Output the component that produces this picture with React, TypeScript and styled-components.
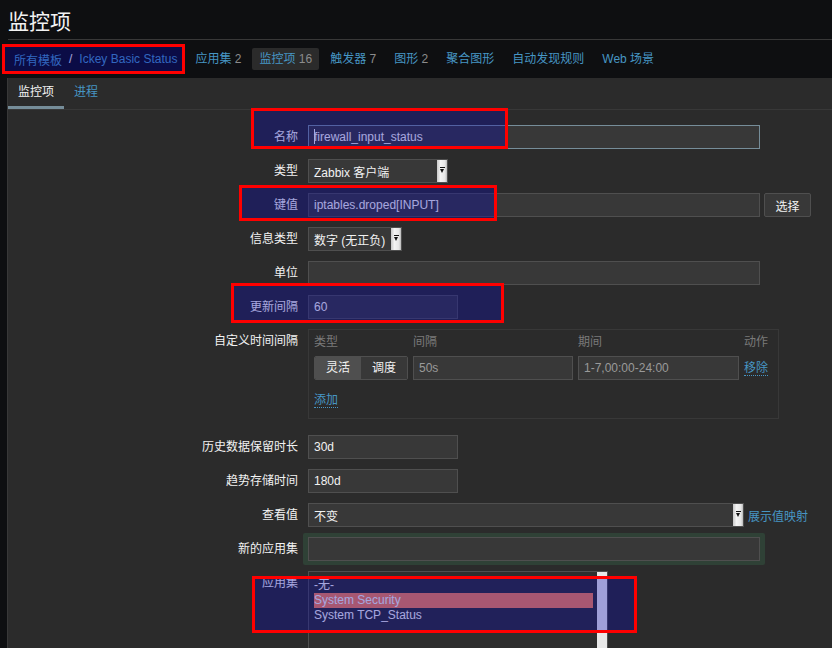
import * as React from 'react';
import styled, { createGlobalStyle } from 'styled-components';

const GlobalStyle = createGlobalStyle`
  html, body {
    margin: 0;
    padding: 0;
    background: #0e0f11;
  }
  body {
    font-family: "Liberation Sans", Arial, "Noto Sans CJK SC", sans-serif;
    font-size: 12px;
    color: #f2f2f2;
  }
`;

const Page = styled.div`
  position: relative;
  width: 832px;
  height: 648px;
  overflow: hidden;
  display: flex;
  flex-direction: column;
`;

const Header = styled.header`
  flex-shrink: 0;
  margin-left: 8px;
  height: 39px;
  border-bottom: 1px solid #383838;
  display: flex;
  align-items: center;
`;

const Title = styled.h1`
  margin: 0;
  font-size: 21px;
  font-weight: normal;
  color: #f2f2f2;
`;

const Nav = styled.nav`
  flex-shrink: 0;
  height: 38px;
  display: flex;
  align-items: center;
  gap: 4px;
  padding-left: 14px;
`;

const Breadcrumbs = styled.div`
  display: flex;
  align-items: center;
  margin-right: 7px;
`;

const Sep = styled.span`
  margin: 0 7px;
  color: #f2f2f2;
`;

const Link = styled.a<{ $dotted?: boolean }>`
  color: #4796c4;
  text-decoration: none;
  cursor: pointer;
  white-space: nowrap;
  ${p => p.$dotted && 'border-bottom: 1px dotted #4796c4; line-height: 15px;'}
`;

const NavItem = styled.a<{ $active?: boolean }>`
  height: 22px;
  line-height: 22px;
  padding: 0 7px;
  border-radius: 2px;
  color: #4796c4;
  white-space: nowrap;
  background: ${p => (p.$active ? '#2b2b2b' : 'transparent')};
`;

const Count = styled.span`
  color: #8c8c8c;
`;

const Panel = styled.main`
  flex: 1 0 auto;
  margin-left: 7px;
  border-left: 1px solid #383838;
  background: #2b2b2b;
`;

const TabBar = styled.div`
  display: flex;
  height: 32px;
  box-sizing: border-box;
  border-bottom: 1px solid #383838;
`;

const Tab = styled.a<{ $active?: boolean }>`
  padding: 0 10px;
  line-height: 28px;
  border-bottom: 3px solid ${p => (p.$active ? '#768d99' : 'transparent')};
  color: ${p => (p.$active ? '#f2f2f2' : '#4796c4')};
`;

const Form = styled.div`
  padding-top: 15px;
`;

const Row = styled.div<{ $gap?: number }>`
  display: grid;
  grid-template-columns: 290px 1fr;
  column-gap: 10px;
  margin-bottom: ${p => p.$gap ?? 10}px;
`;

const Label = styled.label<{ $top?: number }>`
  text-align: right;
  white-space: nowrap;
  color: #f2f2f2;
  line-height: ${p => (p.$top !== undefined ? '16px' : '24px')};
  padding-top: ${p => p.$top ?? 0}px;
`;

const Control = styled.div`
  display: flex;
  align-items: center;
  gap: 4px;
`;

const Field = styled.div<{ $w: number; $focus?: boolean; $dim?: boolean }>`
  box-sizing: border-box;
  width: ${p => p.$w}px;
  height: 24px;
  line-height: 22px;
  padding: 0 5px;
  background: #383838;
  border: 1px solid ${p => (p.$focus ? '#768d99' : '#4f4f4f')};
  color: ${p => (p.$dim ? '#9a9a9a' : '#f2f2f2')};
  white-space: nowrap;
  overflow: hidden;
`;

const Caret = styled.span`
  display: inline-block;
  width: 1px;
  height: 15px;
  margin-right: -1px;
  vertical-align: -3px;
  background: #f2f2f2;
`;

const Select = styled.div<{ $w: number }>`
  box-sizing: border-box;
  width: ${p => p.$w}px;
  height: 24px;
  display: flex;
  background: #383838;
  border: 1px solid #4f4f4f;
`;

const SelectText = styled.span`
  flex: 1;
  padding: 3px 5px 0;
  line-height: 20px;
  white-space: nowrap;
  overflow: hidden;
`;

const SelectArrow = styled.span`
  position: relative;
  width: 10px;
  background: linear-gradient(to right, #c8c8c8, #f4f4f4 35%, #e6e6e6 80%, #b8b8b8);
  &::before {
    content: '';
    position: absolute;
    left: 3px;
    top: 7px;
    width: 5px;
    height: 1px;
    background: #111;
  }
  &::after {
    content: '';
    position: absolute;
    left: 3px;
    top: 9px;
    border-left: 2.5px solid transparent;
    border-right: 2.5px solid transparent;
    border-top: 4px solid #111;
  }
`;

const Button = styled.button`
  box-sizing: border-box;
  width: 47px;
  height: 24px;
  padding: 0;
  border: 1px solid #4f4f4f;
  border-radius: 2px;
  background: #383838;
  color: #f2f2f2;
  font: inherit;
`;

const IntervalBox = styled.div`
  box-sizing: border-box;
  width: 471px;
  border: 1px solid #383838;
  padding: 4px 5px 10px;
`;

const IntervalGrid = styled.div`
  display: grid;
  grid-template-columns: 94px 160px 161px auto;
  column-gap: 5px;
  row-gap: 6px;
  align-items: center;
`;

const ColHead = styled.span`
  line-height: 16px;
  color: #7a7a7a;
`;

const Segmented = styled.div`
  display: flex;
  box-sizing: border-box;
  height: 24px;
  border: 1px solid #4f4f4f;
  border-radius: 2px;
  overflow: hidden;
`;

const Segment = styled.span<{ $on?: boolean }>`
  flex: 1;
  text-align: center;
  line-height: 22px;
  background: ${p => (p.$on ? '#4f4f4f' : '#383838')};
`;

const AddLine = styled.div`
  margin-top: 13px;
`;

const NewAppWrap = styled.div`
  margin-left: -5px;
  width: fit-content;
  padding: 4px 5px 4px;
  background: #2f4136;
  border-radius: 2px;
`;

const ListBox = styled.div`
  box-sizing: border-box;
  width: 300px;
  height: 95px;
  display: flex;
  border: 1px solid #4f4f4f;
  background: #2e2e2e;
`;

const Options = styled.div`
  flex: 1;
  padding: 6px 4px 0 5px;
`;

const Option = styled.div<{ $selected?: boolean }>`
  line-height: 15px;
  white-space: nowrap;
  background: ${p => (p.$selected ? 'rgb(243, 126, 82)' : 'transparent')};
`;

const Scroll = styled.div`
  width: 10px;
  background: #e8e8e8;
`;

const Mark = styled.div<{ $x: number; $y: number; $w: number; $h: number }>`
  position: absolute;
  left: ${p => p.$x}px;
  top: ${p => p.$y}px;
  width: ${p => p.$w}px;
  height: ${p => p.$h}px;
  box-sizing: border-box;
  border: 3px solid #ff0000;
  background: rgba(5, 5, 182, 0.32);
  pointer-events: none;
`;

const navItems = [
  { name: '应用集', count: '2' },
  { name: '监控项', count: '16', active: true },
  { name: '触发器', count: '7' },
  { name: '图形', count: '2' },
  { name: '聚合图形' },
  { name: '自动发现规则' },
  { name: 'Web 场景' },
];

const marks = [
  { x: 2, y: 44, w: 183, h: 30 },
  { x: 251, y: 108, w: 257, h: 41 },
  { x: 239, y: 185, w: 258, h: 36 },
  { x: 231, y: 283, w: 273, h: 40 },
  { x: 252, y: 576, w: 385, h: 57 },
];

export default function App() {
  return (
    <Page>
      <GlobalStyle />
      <Header>
        <Title>监控项</Title>
      </Header>
      <Nav>
        <Breadcrumbs>
          <Link>所有模板</Link>
          <Sep>/</Sep>
          <Link>Ickey Basic Status</Link>
        </Breadcrumbs>
        {navItems.map(item => (
          <NavItem key={item.name} $active={item.active}>
            {item.name}
            {item.count && <Count> {item.count}</Count>}
          </NavItem>
        ))}
      </Nav>
      <Panel>
        <TabBar>
          <Tab $active>监控项</Tab>
          <Tab>进程</Tab>
        </TabBar>
        <Form>
          <Row>
            <Label>名称</Label>
            <Control>
              <Field $w={452} $focus>
                <Caret />
                firewall_input_status
              </Field>
            </Control>
          </Row>
          <Row>
            <Label>类型</Label>
            <Control>
              <Select $w={140}>
                <SelectText>Zabbix 客户端</SelectText>
                <SelectArrow />
              </Select>
            </Control>
          </Row>
          <Row>
            <Label>键值</Label>
            <Control>
              <Field $w={452}>iptables.droped[INPUT]</Field>
              <Button>选择</Button>
            </Control>
          </Row>
          <Row>
            <Label>信息类型</Label>
            <Control>
              <Select $w={94}>
                <SelectText>数字 (无正负)</SelectText>
                <SelectArrow />
              </Select>
            </Control>
          </Row>
          <Row>
            <Label>单位</Label>
            <Control>
              <Field $w={452} />
            </Control>
          </Row>
          <Row>
            <Label>更新间隔</Label>
            <Control>
              <Field $w={150}>60</Field>
            </Control>
          </Row>
          <Row $gap={16}>
            <Label $top={4}>自定义时间间隔</Label>
            <IntervalBox>
              <IntervalGrid>
                <ColHead>类型</ColHead>
                <ColHead>间隔</ColHead>
                <ColHead>期间</ColHead>
                <ColHead>动作</ColHead>
                <Segmented>
                  <Segment $on>灵活</Segment>
                  <Segment>调度</Segment>
                </Segmented>
                <Field $w={160} $dim>50s</Field>
                <Field $w={161} $dim>1-7,00:00-24:00</Field>
                <span>
                  <Link $dotted>移除</Link>
                </span>
              </IntervalGrid>
              <AddLine>
                <Link $dotted>添加</Link>
              </AddLine>
            </IntervalBox>
          </Row>
          <Row>
            <Label>历史数据保留时长</Label>
            <Control>
              <Field $w={150}>30d</Field>
            </Control>
          </Row>
          <Row>
            <Label>趋势存储时间</Label>
            <Control>
              <Field $w={150}>180d</Field>
            </Control>
          </Row>
          <Row $gap={6}>
            <Label>查看值</Label>
            <Control>
              <Select $w={436}>
                <SelectText>不变</SelectText>
                <SelectArrow />
              </Select>
              <Link>展示值映射</Link>
            </Control>
          </Row>
          <Row $gap={6}>
            <Label $top={8}>新的应用集</Label>
            <NewAppWrap>
              <Field $w={452} />
            </NewAppWrap>
          </Row>
          <Row>
            <Label $top={4}>应用集</Label>
            <ListBox>
              <Options>
                <Option>-无-</Option>
                <Option $selected>System Security</Option>
                <Option>System TCP_Status</Option>
              </Options>
              <Scroll />
            </ListBox>
          </Row>
        </Form>
      </Panel>
      {marks.map(m => (
        <Mark key={`${m.x}-${m.y}`} $x={m.x} $y={m.y} $w={m.w} $h={m.h} />
      ))}
    </Page>
  );
}
